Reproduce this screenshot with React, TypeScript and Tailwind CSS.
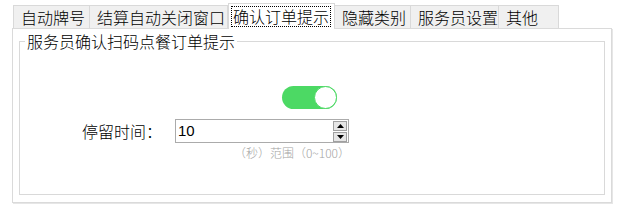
const tabs = [
  { label: '自动牌号', w: 'w-[77px]' },
  { label: '结算自动关闭窗口', w: 'w-[139px]' },
  { label: '确认订单提示', w: 'w-[107px]', active: true },
  { label: '隐藏类别', w: 'w-[77px]' },
  { label: '服务员设置', w: 'w-[89px]' },
  { label: '其他', w: 'w-[61px]' },
];

function Toggle() {
  return (
    <div className="flex h-[23px] w-[55px] items-center justify-end rounded-full bg-[#4cd964]">
      <div className="h-[23px] w-[23px] rounded-full border border-[#4cd964] bg-white" />
    </div>
  );
}

function Spinner() {
  return (
    <div className="flex flex-col gap-[1px]">
      <div className="flex h-[10px] w-[14px] items-center justify-center border border-[#a0a0a0] bg-[#e6e6e6]">
        <svg width="7" height="4" viewBox="0 0 7 4">
          <path d="M0 4 L3.5 0 L7 4 Z" fill="#000" />
        </svg>
      </div>
      <div className="flex h-[10px] w-[14px] items-center justify-center border border-[#a0a0a0] bg-[#e6e6e6]">
        <svg width="7" height="4" viewBox="0 0 7 4">
          <path d="M0 0 L3.5 4 L7 0 Z" fill="#000" />
        </svg>
      </div>
    </div>
  );
}

export default function App() {
  return (
    <div
      className="h-[212px] w-[619px] bg-white pt-[3px] font-light text-black"
      style={{ fontFamily: '"Noto Sans CJK SC", "Liberation Sans", sans-serif' }}
    >
      {/* tab row */}
      <div className="flex h-[25px] items-end pl-[13px]">
        {tabs.map((t) =>
          t.active ? (
            <div
              key={t.label}
              className={`${t.w} relative z-10 -mb-px flex h-[26px] items-center border border-b-0 border-[#d9d9d9] bg-white pl-[2px]`}
            >
              <span className="border border-dotted border-black px-[1px] text-[16px] leading-[19px]">
                {t.label}
              </span>
            </div>
          ) : (
            <div
              key={t.label}
              className={`${t.w} -ml-px flex h-[23px] items-center border border-b-0 border-[#d9d9d9] bg-[#f0f0f0] pl-[7px] text-[16px] leading-[19px] first:ml-0`}
            >
              {t.label}
            </div>
          )
        )}
      </div>

      {/* tab panel */}
      <div className="ml-[12px] h-[175px] w-[600px] border border-[#dadada] px-[6px] pt-[3px] shadow-[1px_1px_0_#e6e6e6]">
        <fieldset className="h-[163px] border border-[#d9d9d9] px-[5px]">
          <legend className="px-[2px] text-[16px] leading-[18px]">服务员确认扫码点餐订单提示</legend>
          <div className="ml-[257px] mt-[36px]">
            <Toggle />
          </div>
          <div className="mt-[10px] flex items-center">
            <span className="ml-[57px] w-[93px] text-[16px]">停留时间：</span>
            <div className="flex h-[24px] w-[174px] items-center justify-between border border-[#ababab] pl-[2px] pr-[1px]">
              <span className="text-[15px] font-normal" style={{ fontFamily: '"Liberation Sans", sans-serif' }}>
                10
              </span>
              <Spinner />
            </div>
          </div>
          <div className="mt-[3px] flex w-[325px] justify-end whitespace-nowrap text-[12px] leading-[14px] text-[#a3a3a3]">
            （秒）范围（0~100）
          </div>
        </fieldset>
      </div>
    </div>
  );
}
